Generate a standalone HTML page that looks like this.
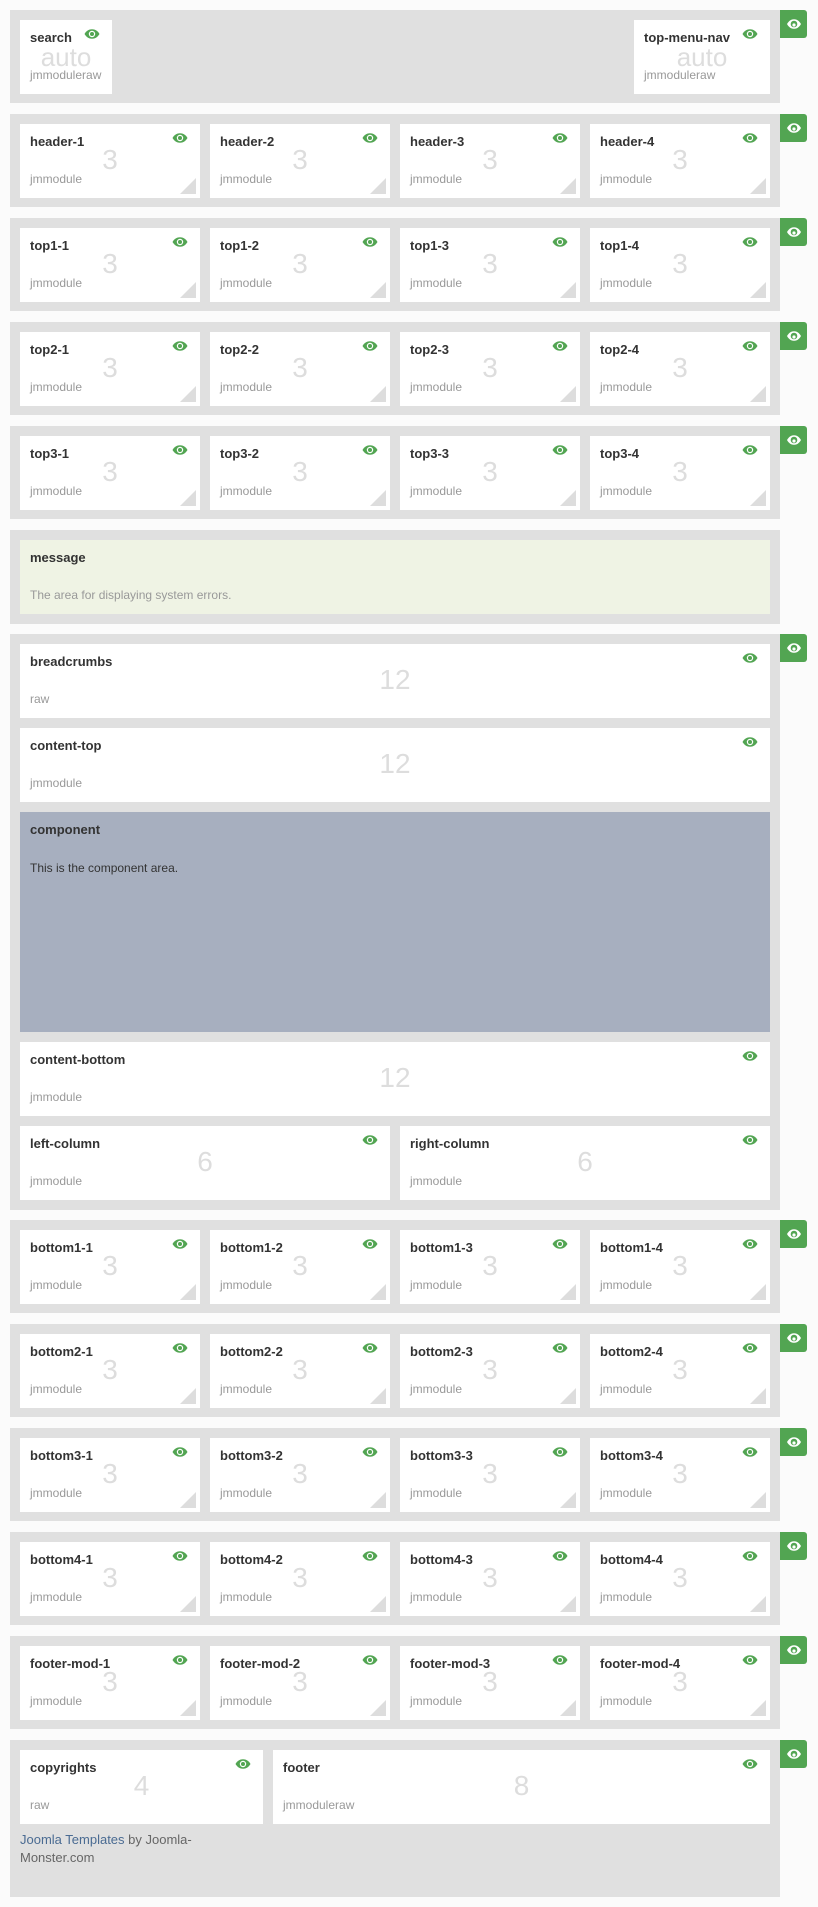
<!DOCTYPE html>
<html><head><meta charset="utf-8"><style>
*{margin:0;padding:0;box-sizing:border-box}
body{width:818px;height:1907px;background:#fbfbfb;font-family:"Liberation Sans",Arial,sans-serif;position:relative;overflow:hidden}
.s{position:absolute;left:10px;width:770px;height:93px;background:#e0e0e0}
.b{position:absolute;left:780px;width:27px;height:28px;background:#52a552;border-radius:0 3px 3px 0}
.b svg{position:absolute;left:6px;top:8px}
.m{position:absolute;top:10px;height:74px;background:#fff}
.t{position:absolute;left:10px;top:10px;font-size:13px;font-weight:bold;color:#333;line-height:15px}
.n{position:absolute;left:0;right:0;text-align:center;top:19px;font-size:28px;color:#ddd;line-height:34px}
.a{position:absolute;left:0;right:0;text-align:center;top:22px;font-size:26px;color:#ddd;line-height:30px}
.j{position:absolute;left:10px;top:48px;font-size:12px;color:#999;line-height:14px}
.e{position:absolute;right:12px;top:9px}
.c{position:absolute;right:4px;bottom:4px;width:0;height:0;border-left:16px solid transparent;border-bottom:16px solid #ddd}
</style></head><body>
<svg width="0" height="0" style="position:absolute"><defs>
<symbol id="eye" viewBox="0 0 16 10"><path d="M0.5 5C2.5 1.6 5 0.3 8 0.3S13.5 1.6 15.5 5C13.5 8.4 11 9.7 8 9.7S2.5 8.4 0.5 5Z" fill="#52a552"/><circle cx="8" cy="5" r="3.2" fill="#fff"/><circle cx="8" cy="5" r="2" fill="#52a552"/></symbol>
<symbol id="weye" viewBox="0 0 16 12"><path d="M1 6C3 2.5 5.3 1.2 8 1.2S13 2.5 15 6C13 9.5 10.7 10.8 8 10.8S3 9.5 1 6Z" fill="#fff"/><circle cx="8" cy="6" r="3.3" fill="#52a552"/><circle cx="8" cy="7" r="1.6" fill="#fff"/></symbol>
</defs></svg>

<!-- row 1 -->
<div class="s" style="top:10px">
 <div class="m" style="left:10px;width:92px"><div class="t">search</div><div class="a">auto</div><div class="j">jmmoduleraw</div><svg class="e" width="16" height="10"><use href="#eye"/></svg></div>
 <div class="m" style="left:624px;width:136px"><div class="t">top-menu-nav</div><div class="a">auto</div><div class="j">jmmoduleraw</div><svg class="e" width="16" height="10"><use href="#eye"/></svg></div>
</div>
<div class="b" style="top:10px"><svg width="16" height="12"><use href="#weye"/></svg></div>

<!-- 4-col rows -->
<div class="s" style="top:114px">
 <div class="m" style="left:10px;width:180px"><div class="t">header-1</div><div class="n">3</div><div class="j">jmmodule</div><svg class="e" width="16" height="10"><use href="#eye"/></svg><div class="c"></div></div>
 <div class="m" style="left:200px;width:180px"><div class="t">header-2</div><div class="n">3</div><div class="j">jmmodule</div><svg class="e" width="16" height="10"><use href="#eye"/></svg><div class="c"></div></div>
 <div class="m" style="left:390px;width:180px"><div class="t">header-3</div><div class="n">3</div><div class="j">jmmodule</div><svg class="e" width="16" height="10"><use href="#eye"/></svg><div class="c"></div></div>
 <div class="m" style="left:580px;width:180px"><div class="t">header-4</div><div class="n">3</div><div class="j">jmmodule</div><svg class="e" width="16" height="10"><use href="#eye"/></svg><div class="c"></div></div>
</div>
<div class="b" style="top:114px"><svg width="16" height="12"><use href="#weye"/></svg></div>

<div class="s" style="top:218px">
 <div class="m" style="left:10px;width:180px"><div class="t">top1-1</div><div class="n">3</div><div class="j">jmmodule</div><svg class="e" width="16" height="10"><use href="#eye"/></svg><div class="c"></div></div>
 <div class="m" style="left:200px;width:180px"><div class="t">top1-2</div><div class="n">3</div><div class="j">jmmodule</div><svg class="e" width="16" height="10"><use href="#eye"/></svg><div class="c"></div></div>
 <div class="m" style="left:390px;width:180px"><div class="t">top1-3</div><div class="n">3</div><div class="j">jmmodule</div><svg class="e" width="16" height="10"><use href="#eye"/></svg><div class="c"></div></div>
 <div class="m" style="left:580px;width:180px"><div class="t">top1-4</div><div class="n">3</div><div class="j">jmmodule</div><svg class="e" width="16" height="10"><use href="#eye"/></svg><div class="c"></div></div>
</div>
<div class="b" style="top:218px"><svg width="16" height="12"><use href="#weye"/></svg></div>

<div class="s" style="top:322px">
 <div class="m" style="left:10px;width:180px"><div class="t">top2-1</div><div class="n">3</div><div class="j">jmmodule</div><svg class="e" width="16" height="10"><use href="#eye"/></svg><div class="c"></div></div>
 <div class="m" style="left:200px;width:180px"><div class="t">top2-2</div><div class="n">3</div><div class="j">jmmodule</div><svg class="e" width="16" height="10"><use href="#eye"/></svg><div class="c"></div></div>
 <div class="m" style="left:390px;width:180px"><div class="t">top2-3</div><div class="n">3</div><div class="j">jmmodule</div><svg class="e" width="16" height="10"><use href="#eye"/></svg><div class="c"></div></div>
 <div class="m" style="left:580px;width:180px"><div class="t">top2-4</div><div class="n">3</div><div class="j">jmmodule</div><svg class="e" width="16" height="10"><use href="#eye"/></svg><div class="c"></div></div>
</div>
<div class="b" style="top:322px"><svg width="16" height="12"><use href="#weye"/></svg></div>

<div class="s" style="top:426px">
 <div class="m" style="left:10px;width:180px"><div class="t">top3-1</div><div class="n">3</div><div class="j">jmmodule</div><svg class="e" width="16" height="10"><use href="#eye"/></svg><div class="c"></div></div>
 <div class="m" style="left:200px;width:180px"><div class="t">top3-2</div><div class="n">3</div><div class="j">jmmodule</div><svg class="e" width="16" height="10"><use href="#eye"/></svg><div class="c"></div></div>
 <div class="m" style="left:390px;width:180px"><div class="t">top3-3</div><div class="n">3</div><div class="j">jmmodule</div><svg class="e" width="16" height="10"><use href="#eye"/></svg><div class="c"></div></div>
 <div class="m" style="left:580px;width:180px"><div class="t">top3-4</div><div class="n">3</div><div class="j">jmmodule</div><svg class="e" width="16" height="10"><use href="#eye"/></svg><div class="c"></div></div>
</div>
<div class="b" style="top:426px"><svg width="16" height="12"><use href="#weye"/></svg></div>

<!-- message -->
<div class="s" style="top:530px;height:94px">
 <div class="m" style="left:10px;width:750px;background:#eff3e4"><div class="t">message</div><div class="j">The area for displaying system errors.</div></div>
</div>

<!-- content -->
<div class="s" style="top:634px;height:576px">
 <div class="m" style="left:10px;width:750px"><div class="t">breadcrumbs</div><div class="n">12</div><div class="j">raw</div><svg class="e" width="16" height="10"><use href="#eye"/></svg></div>
 <div class="m" style="left:10px;top:94px;width:750px"><div class="t">content-top</div><div class="n">12</div><div class="j">jmmodule</div><svg class="e" width="16" height="10"><use href="#eye"/></svg></div>
 <div class="m" style="left:10px;top:178px;width:750px;height:220px;background:#a7afbf"><div class="t">component</div><div class="j" style="top:49px;color:#333">This is the component area.</div></div>
 <div class="m" style="left:10px;top:408px;width:750px"><div class="t">content-bottom</div><div class="n">12</div><div class="j">jmmodule</div><svg class="e" width="16" height="10"><use href="#eye"/></svg></div>
 <div class="m" style="left:10px;top:492px;width:370px"><div class="t">left-column</div><div class="n">6</div><div class="j">jmmodule</div><svg class="e" width="16" height="10"><use href="#eye"/></svg></div>
 <div class="m" style="left:390px;top:492px;width:370px"><div class="t">right-column</div><div class="n">6</div><div class="j">jmmodule</div><svg class="e" width="16" height="10"><use href="#eye"/></svg></div>
</div>
<div class="b" style="top:634px"><svg width="16" height="12"><use href="#weye"/></svg></div>

<div class="s" style="top:1220px">
 <div class="m" style="left:10px;width:180px"><div class="t">bottom1-1</div><div class="n">3</div><div class="j">jmmodule</div><svg class="e" width="16" height="10"><use href="#eye"/></svg><div class="c"></div></div>
 <div class="m" style="left:200px;width:180px"><div class="t">bottom1-2</div><div class="n">3</div><div class="j">jmmodule</div><svg class="e" width="16" height="10"><use href="#eye"/></svg><div class="c"></div></div>
 <div class="m" style="left:390px;width:180px"><div class="t">bottom1-3</div><div class="n">3</div><div class="j">jmmodule</div><svg class="e" width="16" height="10"><use href="#eye"/></svg><div class="c"></div></div>
 <div class="m" style="left:580px;width:180px"><div class="t">bottom1-4</div><div class="n">3</div><div class="j">jmmodule</div><svg class="e" width="16" height="10"><use href="#eye"/></svg><div class="c"></div></div>
</div>
<div class="b" style="top:1220px"><svg width="16" height="12"><use href="#weye"/></svg></div>

<div class="s" style="top:1324px">
 <div class="m" style="left:10px;width:180px"><div class="t">bottom2-1</div><div class="n">3</div><div class="j">jmmodule</div><svg class="e" width="16" height="10"><use href="#eye"/></svg><div class="c"></div></div>
 <div class="m" style="left:200px;width:180px"><div class="t">bottom2-2</div><div class="n">3</div><div class="j">jmmodule</div><svg class="e" width="16" height="10"><use href="#eye"/></svg><div class="c"></div></div>
 <div class="m" style="left:390px;width:180px"><div class="t">bottom2-3</div><div class="n">3</div><div class="j">jmmodule</div><svg class="e" width="16" height="10"><use href="#eye"/></svg><div class="c"></div></div>
 <div class="m" style="left:580px;width:180px"><div class="t">bottom2-4</div><div class="n">3</div><div class="j">jmmodule</div><svg class="e" width="16" height="10"><use href="#eye"/></svg><div class="c"></div></div>
</div>
<div class="b" style="top:1324px"><svg width="16" height="12"><use href="#weye"/></svg></div>

<div class="s" style="top:1428px">
 <div class="m" style="left:10px;width:180px"><div class="t">bottom3-1</div><div class="n">3</div><div class="j">jmmodule</div><svg class="e" width="16" height="10"><use href="#eye"/></svg><div class="c"></div></div>
 <div class="m" style="left:200px;width:180px"><div class="t">bottom3-2</div><div class="n">3</div><div class="j">jmmodule</div><svg class="e" width="16" height="10"><use href="#eye"/></svg><div class="c"></div></div>
 <div class="m" style="left:390px;width:180px"><div class="t">bottom3-3</div><div class="n">3</div><div class="j">jmmodule</div><svg class="e" width="16" height="10"><use href="#eye"/></svg><div class="c"></div></div>
 <div class="m" style="left:580px;width:180px"><div class="t">bottom3-4</div><div class="n">3</div><div class="j">jmmodule</div><svg class="e" width="16" height="10"><use href="#eye"/></svg><div class="c"></div></div>
</div>
<div class="b" style="top:1428px"><svg width="16" height="12"><use href="#weye"/></svg></div>

<div class="s" style="top:1532px">
 <div class="m" style="left:10px;width:180px"><div class="t">bottom4-1</div><div class="n">3</div><div class="j">jmmodule</div><svg class="e" width="16" height="10"><use href="#eye"/></svg><div class="c"></div></div>
 <div class="m" style="left:200px;width:180px"><div class="t">bottom4-2</div><div class="n">3</div><div class="j">jmmodule</div><svg class="e" width="16" height="10"><use href="#eye"/></svg><div class="c"></div></div>
 <div class="m" style="left:390px;width:180px"><div class="t">bottom4-3</div><div class="n">3</div><div class="j">jmmodule</div><svg class="e" width="16" height="10"><use href="#eye"/></svg><div class="c"></div></div>
 <div class="m" style="left:580px;width:180px"><div class="t">bottom4-4</div><div class="n">3</div><div class="j">jmmodule</div><svg class="e" width="16" height="10"><use href="#eye"/></svg><div class="c"></div></div>
</div>
<div class="b" style="top:1532px"><svg width="16" height="12"><use href="#weye"/></svg></div>

<div class="s" style="top:1636px">
 <div class="m" style="left:10px;width:180px"><div class="t">footer-mod-1</div><div class="n">3</div><div class="j">jmmodule</div><svg class="e" width="16" height="10"><use href="#eye"/></svg><div class="c"></div></div>
 <div class="m" style="left:200px;width:180px"><div class="t">footer-mod-2</div><div class="n">3</div><div class="j">jmmodule</div><svg class="e" width="16" height="10"><use href="#eye"/></svg><div class="c"></div></div>
 <div class="m" style="left:390px;width:180px"><div class="t">footer-mod-3</div><div class="n">3</div><div class="j">jmmodule</div><svg class="e" width="16" height="10"><use href="#eye"/></svg><div class="c"></div></div>
 <div class="m" style="left:580px;width:180px"><div class="t">footer-mod-4</div><div class="n">3</div><div class="j">jmmodule</div><svg class="e" width="16" height="10"><use href="#eye"/></svg><div class="c"></div></div>
</div>
<div class="b" style="top:1636px"><svg width="16" height="12"><use href="#weye"/></svg></div>

<!-- copyright -->
<div class="s" style="top:1740px;height:157px">
 <div class="m" style="left:10px;width:243px"><div class="t">copyrights</div><div class="n">4</div><div class="j">raw</div><svg class="e" width="16" height="10"><use href="#eye"/></svg></div>
 <div class="m" style="left:263px;width:497px"><div class="t">footer</div><div class="n">8</div><div class="j">jmmoduleraw</div><svg class="e" width="16" height="10"><use href="#eye"/></svg></div>
 <div style="position:absolute;left:10px;top:91px;width:200px;font-size:13px;line-height:18px;color:#666"><span style="color:#4a6b92">Joomla Templates</span> by Joomla-Monster.com</div>
</div>
<div class="b" style="top:1740px"><svg width="16" height="12"><use href="#weye"/></svg></div>
</body></html>
